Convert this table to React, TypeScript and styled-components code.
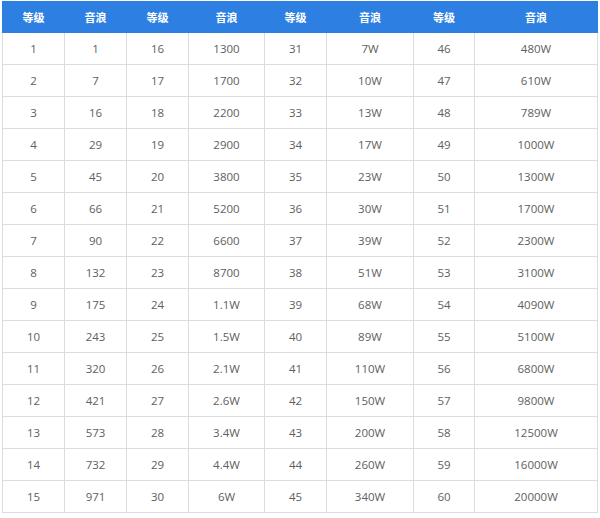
import React from 'react';
import styled, { createGlobalStyle } from 'styled-components';

const GlobalStyle = createGlobalStyle`
  html, body {
    margin: 0;
    padding: 0;
    background: #fff;
  }
`;

const Wrap = styled.div`
  padding: 1px 0 0 2px;
`;

const Table = styled.table`
  border-collapse: collapse;
  table-layout: fixed;
  width: 596px;
  font-family: "Open Sans", "Noto Sans CJK SC", sans-serif;
`;

const Col = styled.col<{ $w: number }>`
  width: ${p => p.$w}px;
`;

const HeadCell = styled.th`
  height: 30px;
  padding: 0;
  background: #2e7fe2;
  color: #fff;
  font-family: "Noto Sans CJK SC", sans-serif;
  font-size: 11px;
  font-weight: bold;
  text-align: center;
  border: 1px solid #2e7fe2;
`;

const Cell = styled.td`
  height: 31px;
  padding: 0;
  color: #606060;
  font-size: 11.5px;
  text-align: center;
  border: 1px solid #dcdcdc;
`;

// distance between grid lines
const widths = [62, 62, 62, 76, 62, 87, 61, 123];

const col2 = ['1', '7', '16', '29', '45', '66', '90', '132', '175', '243', '320', '421', '573', '732', '971'];
const col4 = ['1300', '1700', '2200', '2900', '3800', '5200', '6600', '8700', '1.1W', '1.5W', '2.1W', '2.6W', '3.4W', '4.4W', '6W'];
const col6 = ['7W', '10W', '13W', '17W', '23W', '30W', '39W', '51W', '68W', '89W', '110W', '150W', '200W', '260W', '340W'];
const col8 = ['480W', '610W', '789W', '1000W', '1300W', '1700W', '2300W', '3100W', '4090W', '5100W', '6800W', '9800W', '12500W', '16000W', '20000W'];

export default function App() {
  return (
    <>
      <GlobalStyle />
      <Wrap>
        <Table>
          <colgroup>
            {widths.map((w, i) => (
              <Col key={i} $w={w} />
            ))}
          </colgroup>
          <thead>
            <tr>
              {widths.map((_, i) => (
                <HeadCell key={i}>{i % 2 === 0 ? '等级' : '音浪'}</HeadCell>
              ))}
            </tr>
          </thead>
          <tbody>
            {col2.map((_, r) => (
              <tr key={r}>
                <Cell>{r + 1}</Cell>
                <Cell>{col2[r]}</Cell>
                <Cell>{r + 16}</Cell>
                <Cell>{col4[r]}</Cell>
                <Cell>{r + 31}</Cell>
                <Cell>{col6[r]}</Cell>
                <Cell>{r + 46}</Cell>
                <Cell>{col8[r]}</Cell>
              </tr>
            ))}
          </tbody>
        </Table>
      </Wrap>
    </>
  );
}
